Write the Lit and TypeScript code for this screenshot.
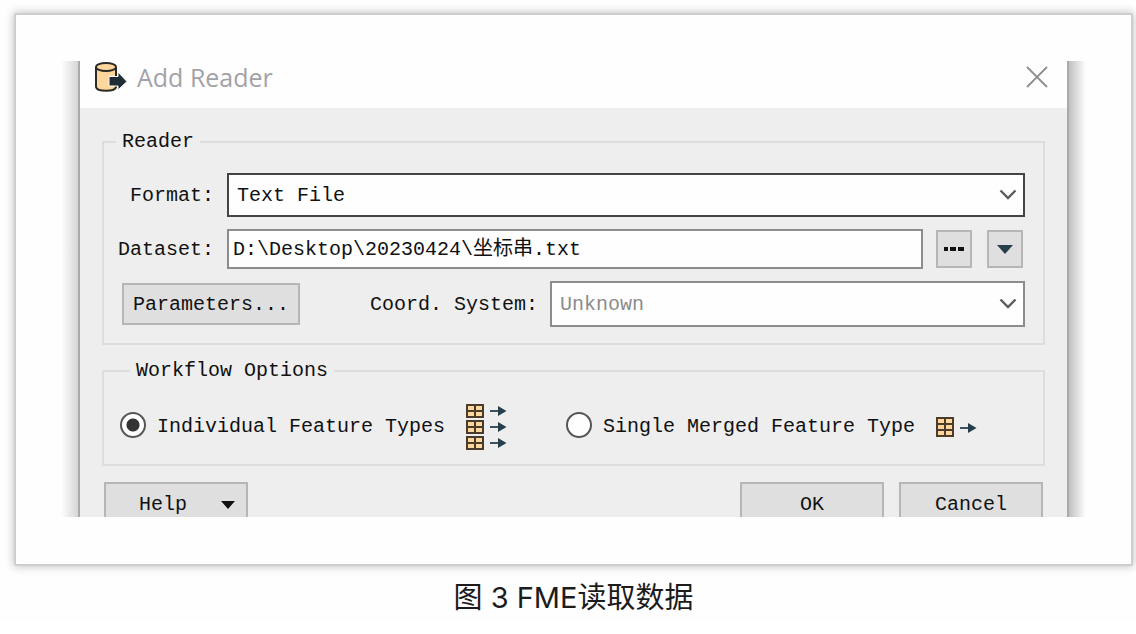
import { LitElement, html, css, svg } from "lit";
import { customElement, state } from "lit/decorators.js";

const chevron = html`<svg class="chevron" width="18" height="12" viewBox="0 0 18 12" aria-hidden="true">
  <path d="M1.5 1.5 L9 9 L16.5 1.5" fill="none" stroke="#5c5c5c" stroke-width="2.4" />
</svg>`;

// One feature table: a tan grid with the given number of rows.
const featureTable = (y: number, rows: number, rowHeight: number) => {
  const h = rows * rowHeight + 2;
  const lines = [];
  for (let i = 1; i < rows; i++) {
    lines.push(svg`<path d=${`M1 ${y + 1 + i * rowHeight}H18`} />`);
  }
  return svg`<g fill="#ffd79c" stroke="#4a3b2a" stroke-width="2">
    <rect x="1" y=${y + 1} width="16" height=${h - 2} />
    <path d=${`M9 ${y + 1}V${y + h - 1}`} />
    ${lines}
  </g>`;
};

const featureArrow = (y: number) => svg`<g>
  <path d=${`M24 ${y}H34`} stroke="#3b525c" stroke-width="2" />
  <path d=${`M32 ${y - 5}L40.500 ${y}L32 ${y + 5}Z`} fill="#263f4a" />
</g>`;

@customElement("app-root")
export class AppRoot extends LitElement {
  @state() private workflow = "individual";

  static styles = css`
    :host {
      display: block;
      background: #fefefe;
      color: #111;
    }
    * {
      box-sizing: border-box;
    }
    .figure {
      margin: 0;
      padding: 13px 3px 0 14px;
    }
    .frame {
      border: 2px solid #cecece;
      border-radius: 2px;
      background: #fefefe;
      box-shadow: 0 0 8px 1px rgba(0, 0, 0, 0.22);
      padding: 46px 46px 47px;
      display: flex;
    }
    .edge {
      flex: none;
      width: 18px;
    }
    .edge-left {
      background: linear-gradient(to right, #fcfcfc, #d6d6d6);
      border-right: 2px solid #aaa;
    }
    .edge-right {
      background: linear-gradient(to right, #c0c0c0, #fbfbfb);
      border-left: 2px solid #aaa;
    }
    .dialog {
      flex: 1;
      min-width: 0;
      background: #eeeeee;
      font: 20px/24px "Liberation Mono", "Noto Sans CJK SC", monospace;
    }
    .titlebar {
      display: flex;
      align-items: center;
      height: 47px;
      padding: 0 18px 16px 14px;
      background: #fefefe;
    }
    .title {
      flex: 1;
      margin: 0 0 0 10px;
      font: 25px/32px "Open Sans", "Noto Sans", sans-serif;
      color: #a2a2a6;
    }
    .close {
      display: flex;
      padding: 0;
      border: 0;
      background: none;
    }
    .body {
      padding: 22px 22px 0;
    }
    .group {
      margin: 0 0 14px;
      min-width: 0;
      border: 2px solid #dddddd;
      padding: 19px 18px 16px 18px;
    }
    .group-workflow {
      margin-bottom: 16px;
      padding: 20px 16px 13px;
    }
    .legend {
      padding: 0 6px;
      margin-left: -6px;
    }
    .group-workflow .legend {
      margin-left: 10px;
    }
    .row {
      display: flex;
      align-items: center;
      margin-bottom: 12px;
    }
    .row:last-child {
      margin: 0;
    }
    .row-label {
      flex: none;
      width: 105px;
      padding: 2px 13px 0 0;
      display: flex;
      justify-content: flex-end;
    }
    .select-box {
      flex: 1;
      min-width: 0;
      display: grid;
      align-items: center;
    }
    .select,
    .chevron {
      grid-area: 1 / 1;
    }
    .chevron {
      justify-self: end;
      margin-right: 8px;
      pointer-events: none;
    }
    .select,
    .text {
      width: 100%;
      margin: 0;
      border: 2px solid #8c8c8c;
      border-radius: 0;
      background: #fefefe;
      color: inherit;
      font: inherit;
      appearance: none;
      outline: none;
    }
    .select {
      height: 44px;
      padding: 2px 32px 0 8px;
    }
    .select-active {
      border-color: #444;
    }
    .select-muted {
      height: 46px;
      color: #8c8c8c;
    }
    .text {
      flex: 1;
      min-width: 0;
      height: 40px;
      padding: 0 4px 6px;
    }
    .button {
      display: flex;
      align-items: center;
      justify-content: center;
      flex: none;
      padding: 2px 0 0;
      border: 2px solid #b6b6b6;
      border-radius: 0;
      background: #dfdfdf;
      color: inherit;
      font: inherit;
    }
    .tool {
      width: 36px;
      height: 38px;
      margin: 0 2px 0 13px;
      padding: 0;
    }
    .parameters {
      width: 178px;
      height: 42px;
    }
    .coord-label {
      flex: none;
      margin: 0 12px 0 70px;
      padding-top: 2px;
    }
    .options {
      display: flex;
      align-items: center;
      gap: 59px;
    }
    .option {
      display: flex;
      align-items: center;
      height: 48px;
      white-space: nowrap;
    }
    .radio {
      appearance: none;
      flex: none;
      width: 26px;
      height: 26px;
      margin: 0 11px 4px 0;
      border: 2px solid #555;
      border-radius: 50%;
      background: #fefefe;
    }
    .radio:checked {
      background: radial-gradient(circle, #333 6px, #fefefe 7px);
    }
    .option-icon {
      flex: none;
      margin-left: 21px;
    }
    .footer {
      display: flex;
      gap: 15px;
      height: 35px;
      padding: 0 2px;
      overflow: hidden;
    }
    .action {
      width: 144px;
      height: 44px;
    }
    .help {
      margin-right: auto;
      gap: 34px;
      padding-left: 22px;
    }
    .caption {
      margin-top: 10px;
      text-align: center;
      font: 29px/44px Inter, "Noto Sans CJK SC", sans-serif;
      color: #1c1c1c;
    }
  `;

  private choose(e: Event) {
    this.workflow = (e.target as HTMLInputElement).value;
  }

  render() {
    return html`
      <figure class="figure">
        <div class="frame">
          <div class="edge edge-left"></div>
          <section class="dialog" aria-labelledby="title">
            <header class="titlebar">
              <svg width="33" height="30" viewBox="0 0 33 30" aria-hidden="true">
                <path d="M2 5V25C3 30 21 30 22 25V5" fill="#ffd79c" stroke="#2c2a26" stroke-width="2" />
                <ellipse cx="12" cy="5" rx="10" ry="4" fill="#ffd79c" stroke="#2c2a26" stroke-width="1.800" />
                <path d="M15 14.500H24V10L33 19.500L24 28V24H15Z" fill="#1f2e36" stroke="#fefefe" stroke-width="1" />
              </svg>
              <h1 class="title" id="title">Add Reader</h1>
              <button class="close" aria-label="Close">
                <svg width="24" height="24" viewBox="0 0 24 24" aria-hidden="true">
                  <path d="M2 2L22 22M22 2L2 22" stroke="#8f8f8f" stroke-width="1.800" />
                </svg>
              </button>
            </header>
            <div class="body">
              <fieldset class="group">
                <legend class="legend">Reader</legend>
                <div class="row">
                  <label class="row-label" for="format">Format:</label>
                  <div class="select-box">
                    <select class="select select-active" id="format">
                      <option>Text File</option>
                    </select>
                    ${chevron}
                  </div>
                </div>
                <div class="row">
                  <label class="row-label" for="dataset">Dataset:</label>
                  <input class="text" id="dataset" type="text" .value=${"D:\\Desktop\\20230424\\坐标串.txt"} />
                  <button class="button tool" aria-label="Browse">
                    <svg width="22" height="6" viewBox="0 0 22 6" aria-hidden="true">
                      <path d="M1 1H5V5H1ZM7 1H13V5H7ZM15 1H21V5H15Z" fill="#111" />
                    </svg>
                  </button>
                  <button class="button tool" aria-label="More sources">
                    <svg width="16" height="9" viewBox="0 0 16 9" aria-hidden="true">
                      <path d="M0 0H16L8 9Z" fill="#263f4a" />
                    </svg>
                  </button>
                </div>
                <div class="row">
                  <button class="button parameters">Parameters...</button>
                  <label class="coord-label" for="coord">Coord. System:</label>
                  <div class="select-box">
                    <select class="select select-muted" id="coord">
                      <option>Unknown</option>
                    </select>
                    ${chevron}
                  </div>
                </div>
              </fieldset>
              <fieldset class="group group-workflow">
                <legend class="legend">Workflow Options</legend>
                <div class="options">
                  <label class="option">
                    <input class="radio" type="radio" name="workflow" value="individual"
                      .checked=${this.workflow === "individual"} @change=${this.choose} />
                    Individual Feature Types
                    <svg class="option-icon" width="41" height="46" viewBox="0 0 41 46" aria-hidden="true">
                      ${[0, 16, 32].map((y) => [featureTable(y, 2, 6), featureArrow(y + 7)])}
                    </svg>
                  </label>
                  <label class="option">
                    <input class="radio" type="radio" name="workflow" value="merged"
                      .checked=${this.workflow === "merged"} @change=${this.choose} />
                    Single Merged Feature Type
                    <svg class="option-icon" width="41" height="20" viewBox="0 0 41 20" aria-hidden="true">
                      ${featureTable(0, 3, 6)} ${featureArrow(11)}
                    </svg>
                  </label>
                </div>
              </fieldset>
              <footer class="footer">
                <button class="button action help">
                  Help
                  <svg width="14" height="8" viewBox="0 0 14 8" aria-hidden="true">
                    <path d="M0 0H14L7 8Z" fill="#111" />
                  </svg>
                </button>
                <button class="button action">OK</button>
                <button class="button action">Cancel</button>
              </footer>
            </div>
          </section>
          <div class="edge edge-right"></div>
        </div>
        <figcaption class="caption">图 3 FME读取数据</figcaption>
      </figure>
    `;
  }
}
